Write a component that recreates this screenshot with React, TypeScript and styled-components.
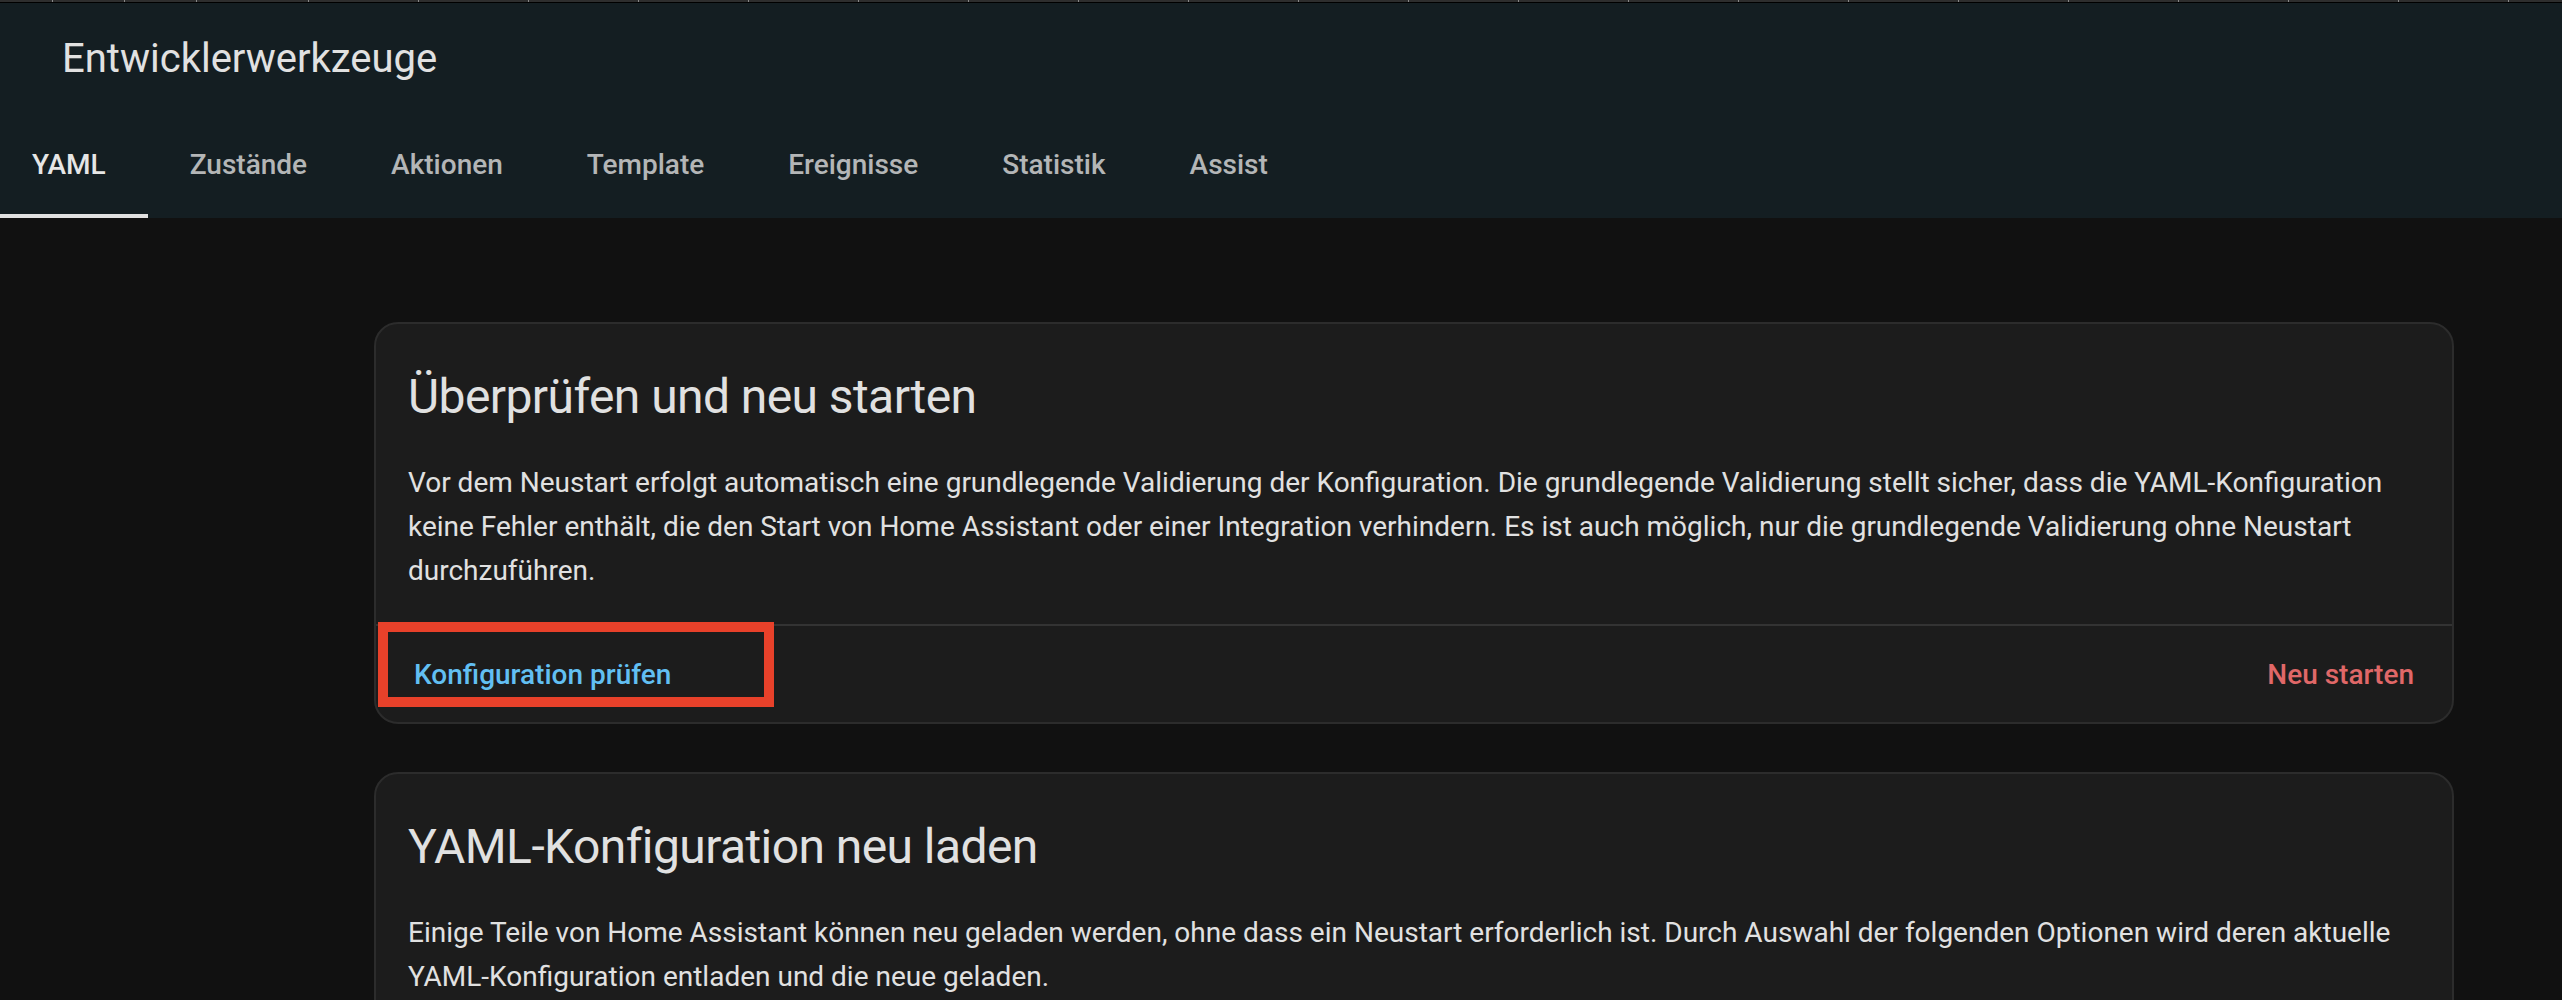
import React from "react";
import styled, { createGlobalStyle, css } from "styled-components";

const GlobalStyle = createGlobalStyle`
  html, body {
    margin: 0;
    padding: 0;
    background: #111111;
    overflow: hidden;
    font-family: Roboto, "Noto Sans", "Liberation Sans", sans-serif;
    -webkit-font-smoothing: antialiased;
  }
  * { box-sizing: border-box; }
`;

const Page = styled.div`
  display: flex;
  flex-direction: column;
  min-height: 1000px;
  background: #111111;
`;

/* thin tick strip along the very top edge */
const Ruler = styled.div`
  display: flex;
  height: 3px;
  background: #2e2e2e;
  border-bottom: 1px solid #000;
`;

const RulerSegment = styled.div<{ $w: number }>`
  flex: 0 0 ${(p) => p.$w}px;
  border-right: 1px solid #8a8a8a;
`;

const Header = styled.header`
  background: #141e22;
  display: flex;
  flex-direction: column;
`;

const Toolbar = styled.div`
  height: 110px;
  display: flex;
  align-items: center;
  padding-left: 62px;
`;

const Title = styled.div`
  font-size: 40px;
  font-weight: 400;
  color: #e1e1e1;
`;

const TabBar = styled.nav`
  display: flex;
  height: 96px;
  margin-top: 9px;
`;

const Tab = styled.div<{ $active?: boolean }>`
  height: 96px;
  padding: 26px 42px 0;
  font-size: 28px;
  font-weight: 500;
  line-height: normal;
  color: rgba(225, 225, 225, 0.78);
  white-space: nowrap;
  &:first-child {
    padding-left: 32px;
  }
  ${(p) =>
    p.$active &&
    css`
      color: #e6e6e6;
      box-shadow: inset 0 -4px 0 #e1e1e1;
    `}
`;

const Main = styled.main`
  padding: 104px 0 0 374px;
`;

const Column = styled.div`
  width: 2080px;
  display: flex;
  flex-direction: column;
  gap: 48px;
`;

const Card = styled.section`
  background: #1c1c1c;
  border: 2px solid #2c2c2c;
  border-radius: 24px;
`;

const CardHeader = styled.h1`
  margin: 0;
  padding: 25px 32px 16px;
  font-size: 48px;
  line-height: 96px;
  font-weight: 400;
  letter-spacing: -0.012em;
  color: #e1e1e1;
`;

const CardContent = styled.p<{ $bottom?: number }>`
  margin: 0;
  padding: 0 32px ${(p) => p.$bottom ?? 31}px;
  font-size: 28px;
  line-height: 44px;
  font-weight: 400;
  color: #e1e1e1;
`;

const CardActions = styled.div`
  border-top: 2px solid #333333;
  padding: 13px 16px 11px;
  display: flex;
  justify-content: space-between;
  align-items: center;
`;

const ButtonWrap = styled.span`
  position: relative;
  display: inline-flex;
`;

const ActionButton = styled.button<{ $tone: string }>`
  height: 72px;
  padding: 0 22px;
  background: transparent;
  border: none;
  border-radius: 8px;
  font-family: inherit;
  font-size: 28px;
  font-weight: 500;
  line-height: 72px;
  color: ${(p) => p.$tone};
  cursor: pointer;
`;

/* red annotation frame drawn over the check button */
const Highlight = styled.span`
  position: absolute;
  left: -14px;
  top: -17px;
  width: 396px;
  height: 85px;
  border: 10px solid #e8412a;
  pointer-events: none;
`;

const ticks = [
  53, 125, 197, 309, 419, 529, 639, 749, 859, 969, 1079, 1189, 1299, 1409,
  1519, 1629, 1739, 1849, 1959, 2069, 2179, 2289, 2399, 2509,
];

const tabs = [
  "YAML",
  "Zustände",
  "Aktionen",
  "Template",
  "Ereignisse",
  "Statistik",
  "Assist",
];

export default function App() {
  const segments = ticks.map((t, i) => t - (i === 0 ? 0 : ticks[i - 1]));
  return (
    <>
      <GlobalStyle />
      <Page>
        <Header>
          <Ruler>
            {segments.map((w, i) => (
              <RulerSegment key={i} $w={w} />
            ))}
          </Ruler>
          <Toolbar>
            <Title>Entwicklerwerkzeuge</Title>
          </Toolbar>
          <TabBar>
            {tabs.map((t, i) => (
              <Tab key={t} $active={i === 0}>
                {t}
              </Tab>
            ))}
          </TabBar>
        </Header>
        <Main>
          <Column>
            <Card>
              <CardHeader>Überprüfen und neu starten</CardHeader>
              <CardContent>
                Vor dem Neustart erfolgt automatisch eine grundlegende
                Validierung der Konfiguration. Die grundlegende Validierung
                stellt sicher, dass die YAML-Konfiguration keine Fehler
                enthält, die den Start von Home Assistant oder einer
                Integration verhindern. Es ist auch möglich, nur die
                grundlegende Validierung ohne Neustart durchzuführen.
              </CardContent>
              <CardActions>
                <ButtonWrap>
                  <ActionButton $tone="#62bff2">Konfiguration prüfen</ActionButton>
                  <Highlight />
                </ButtonWrap>
                <ActionButton $tone="#e06868">Neu starten</ActionButton>
              </CardActions>
            </Card>
            <Card>
              <CardHeader>YAML-Konfiguration neu laden</CardHeader>
              <CardContent $bottom={200}>
                Einige Teile von Home Assistant können neu geladen werden,
                ohne dass ein Neustart erforderlich ist. Durch Auswahl der
                folgenden Optionen wird deren aktuelle YAML-Konfiguration
                entladen und die neue geladen.
              </CardContent>
            </Card>
          </Column>
        </Main>
      </Page>
    </>
  );
}
